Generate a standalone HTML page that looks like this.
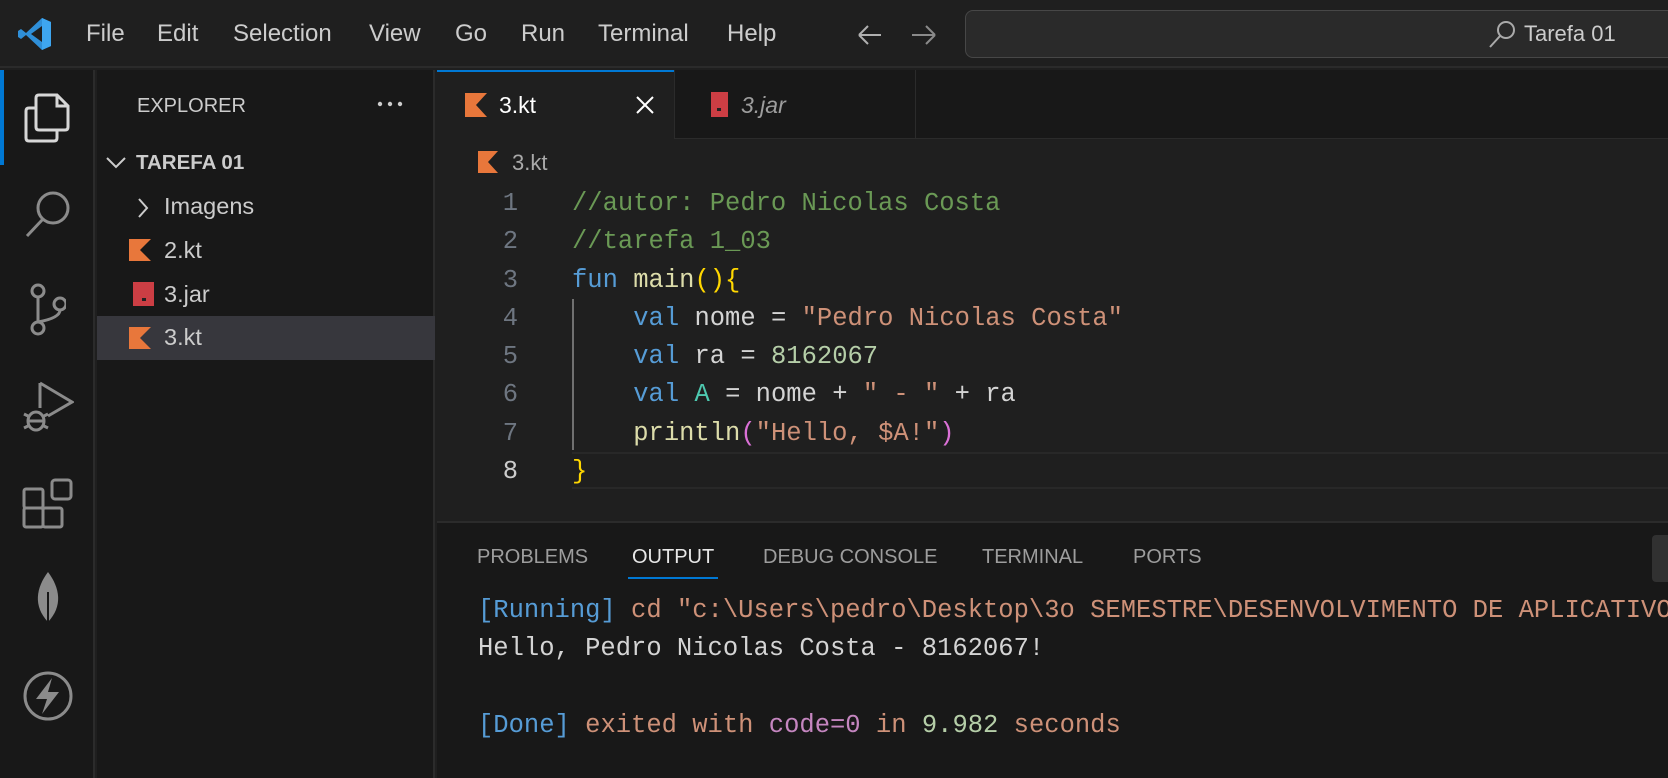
<!DOCTYPE html>
<html><head><meta charset="utf-8"><style>
*{margin:0;padding:0;box-sizing:border-box}
body{width:1668px;height:778px;background:#1f1f1f;overflow:hidden;position:relative;font-family:"Liberation Sans",sans-serif;color:#ccc}
.a{position:absolute}
.menu{top:20px;font-size:24px;color:#cccccc}
.mono{font-family:"Liberation Mono",monospace}
.code{font-size:25.5px;line-height:38.3px;white-space:pre}
.ln{font-size:25.5px;color:#6e7681;width:60px;text-align:right;left:458px}
.ptab{top:546px;font-size:20px;color:#9d9d9d}
.out{font-size:25.5px;white-space:pre;left:478px}
.sb{font-size:23.5px;color:#cccccc}
</style></head><body>
<!-- title bar -->
<div class="a" style="left:0;top:0;width:1668px;height:68px;background:#1f1f1f;border-bottom:2px solid #2b2b2b"></div>
<svg class="a" style="left:18px;top:17px" width="34" height="34" viewBox="0 0 34 34"><path d="M24 1 L33 5 V29 L24 33 L8 18 L3 22 L0 20 V14 L3 12 L8 16 Z M24 9 L13 17 L24 25 Z" fill="#2f8fd8"/><path d="M24 1 L33 5 V29 L24 33 Z" fill="#3ea6f0"/></svg>
<div class="a menu" style="left:86px">File</div>
<div class="a menu" style="left:157px">Edit</div>
<div class="a menu" style="left:233px">Selection</div>
<div class="a menu" style="left:369px">View</div>
<div class="a menu" style="left:455px">Go</div>
<div class="a menu" style="left:521px">Run</div>
<div class="a menu" style="left:598px">Terminal</div>
<div class="a menu" style="left:727px">Help</div>
<svg class="a" style="left:855px;top:22px" width="90" height="26"><path d="M4 13H26M4 13L13 4M4 13L13 22" stroke="#b0b0b0" stroke-width="2" fill="none"/><path d="M57 13H80M80 13L71 4M80 13L71 22" stroke="#8a8a8a" stroke-width="2" fill="none"/></svg>
<div class="a" style="left:965px;top:10px;width:720px;height:48px;border:1.5px solid #474747;border-radius:8px;background:#2a2a2a"></div>
<svg class="a" style="left:1487px;top:20px" width="30" height="30"><circle cx="19" cy="10" r="8" stroke="#aaa" stroke-width="2" fill="none"/><path d="M13 16L3 27" stroke="#aaa" stroke-width="2"/></svg>
<div class="a" style="left:1524px;top:21px;font-size:22px;color:#cccccc">Tarefa 01</div>

<!-- activity bar -->
<div class="a" style="left:0;top:70px;width:95px;height:708px;background:#181818;border-right:2px solid #2b2b2b"></div>
<div class="a" style="left:0;top:70px;width:4px;height:95px;background:#0078d4"></div>
<svg class="a" style="left:22px;top:90px" width="50" height="56" viewBox="0 0 50 56"><path d="M17 5H35L46 16V37Q46 40 43 40H17Q14 40 14 37V8Q14 5 17 5Z M35 5V16H46" stroke="#d7d7d7" stroke-width="3" fill="none"/><path d="M14 18H7Q4 18 4 21V48Q4 51 7 51H32Q35 51 35 48V40" stroke="#d7d7d7" stroke-width="3" fill="none"/></svg>
<svg class="a" style="left:24px;top:188px" width="50" height="50"><circle cx="29" cy="20" r="15" stroke="#8b8b8b" stroke-width="3" fill="none"/><path d="M19 31L3 48" stroke="#8b8b8b" stroke-width="3"/></svg>
<svg class="a" style="left:26px;top:282px" width="40" height="54"><g stroke="#8b8b8b" stroke-width="3" fill="none"><circle cx="12" cy="9" r="6"/><circle cx="12" cy="46" r="6"/><circle cx="34" cy="22" r="6"/><path d="M12 15V40M34 28Q34 36 12 40"/></g></svg>
<svg class="a" style="left:22px;top:380px" width="52" height="52"><g stroke="#8b8b8b" stroke-width="3" fill="none"><path d="M18 3V28M18 3L50 22L26 36"/><ellipse cx="14" cy="41" rx="8" ry="9"/><path d="M2 34L8 37M2 48L8 45M26 34L20 37M26 48L20 45M6 41H22"/></g></svg>
<svg class="a" style="left:22px;top:478px" width="52" height="52"><g stroke="#8b8b8b" stroke-width="3" fill="none"><rect x="2" y="11" width="19" height="19" rx="2"/><rect x="2" y="30" width="19" height="19" rx="2"/><rect x="21" y="30" width="19" height="19" rx="2"/><rect x="30" y="2" width="19" height="19" rx="3"/></g></svg>
<svg class="a" style="left:32px;top:570px" width="32" height="60"><path d="M16 2C4 18 1 36 16 52C31 36 28 18 16 2Z" fill="#8b8b8b"/><path d="M16 22V58" stroke="#181818" stroke-width="2"/></svg>
<svg class="a" style="left:22px;top:670px" width="52" height="52"><circle cx="26" cy="26" r="23" stroke="#8b8b8b" stroke-width="3" fill="none"/><path d="M30 8L14 29H25L20 44L37 22H26Z" fill="#8b8b8b"/></svg>

<!-- sidebar -->
<div class="a" style="left:97px;top:70px;width:338px;height:708px;background:#181818;border-right:2px solid #2b2b2b"></div>
<div class="a" style="left:137px;top:95px;font-size:20px;color:#cccccc">EXPLORER</div>
<svg class="a" style="left:376px;top:100px" width="30" height="8"><circle cx="4" cy="4" r="2.2" fill="#ccc"/><circle cx="14" cy="4" r="2.2" fill="#ccc"/><circle cx="24" cy="4" r="2.2" fill="#ccc"/></svg>
<svg class="a" style="left:104px;top:155px" width="24" height="16"><path d="M3 3L12 12L21 3" stroke="#ccc" stroke-width="2" fill="none"/></svg>
<div class="a" style="left:136px;top:151px;font-size:20.5px;font-weight:bold;color:#cccccc">TAREFA 01</div>
<svg class="a" style="left:136px;top:196px" width="14" height="24"><path d="M3 3L11 12L3 21" stroke="#ccc" stroke-width="2" fill="none"/></svg>
<div class="a sb" style="left:164px;top:193px">Imagens</div>
<svg class="a" style="left:129px;top:239px" width="22" height="22"><path d="M0 0H22L11 11L22 22H0Z" fill="#e8773b"/></svg>
<div class="a sb" style="left:164px;top:237px">2.kt</div>
<svg class="a" style="left:133px;top:282px" width="22" height="24"><rect width="21" height="24" fill="#cc3e44"/><rect x="9" y="16" width="4" height="3" fill="#222"/></svg>
<div class="a sb" style="left:164px;top:281px">3.jar</div>
<div class="a" style="left:97px;top:316px;width:338px;height:44px;background:#37373d"></div>
<svg class="a" style="left:129px;top:327px" width="22" height="22"><path d="M0 0H22L11 11L22 22H0Z" fill="#e8773b"/></svg>
<div class="a sb" style="left:164px;top:324px">3.kt</div>

<!-- tabs -->
<div class="a" style="left:437px;top:70px;width:1231px;height:69px;background:#181818;border-bottom:1px solid #2b2b2b"></div>
<div class="a" style="left:437px;top:70px;width:237px;height:70px;background:#1f1f1f;border-top:2px solid #0078d4"></div>
<div class="a" style="left:674px;top:70px;width:1px;height:69px;background:#2b2b2b"></div>
<div class="a" style="left:915px;top:70px;width:1px;height:69px;background:#2b2b2b"></div>
<svg class="a" style="left:465px;top:93px" width="22" height="24"><path d="M0 0H22L11 12L22 24H0Z" fill="#e8773b"/></svg>
<div class="a" style="left:499px;top:92px;font-size:23px;color:#ffffff">3.kt</div>
<svg class="a" style="left:636px;top:96px" width="18" height="18"><path d="M1 1L17 17M17 1L1 17" stroke="#fff" stroke-width="2"/></svg>
<svg class="a" style="left:711px;top:92px" width="17" height="25"><rect width="17" height="25" fill="#cc3e44"/><rect x="6" y="16" width="4" height="3" fill="#222"/></svg>
<div class="a" style="left:741px;top:92px;font-size:23px;color:#9d9d9d;font-style:italic">3.jar</div>

<!-- breadcrumb -->
<svg class="a" style="left:478px;top:151px" width="20" height="22"><path d="M0 0H20L10 11L20 22H0Z" fill="#e8773b"/></svg>
<div class="a" style="left:512px;top:150px;font-size:22px;color:#a9a9a9">3.kt</div>

<!-- code -->
<div class="a" style="left:572px;top:452px;width:1096px;height:37px;border-top:2px solid #282828;border-bottom:2px solid #282828"></div>
<div class="a" style="left:572px;top:299px;width:2px;height:151px;background:#707070"></div>
<div class="a mono ln" style="top:185px;line-height:38.3px;white-space:pre">1
2
3
4
5
6
7
<span style="color:#ccc">8</span></div>
<div class="a mono code" style="left:572px;top:185px"><span style="color:#6a9955">//autor: Pedro Nicolas Costa</span>
<span style="color:#6a9955">//tarefa 1_03</span>
<span style="color:#569cd6">fun</span> <span style="color:#dcdcaa">main</span><span style="color:#ffd700">(){</span>
    <span style="color:#569cd6">val</span> <span style="color:#d4d4d4">nome</span> <span style="color:#d4d4d4">=</span> <span style="color:#ce9178">"Pedro Nicolas Costa"</span>
    <span style="color:#569cd6">val</span> <span style="color:#d4d4d4">ra =</span> <span style="color:#b5cea8">8162067</span>
    <span style="color:#569cd6">val</span> <span style="color:#4ec9b0">A</span> <span style="color:#d4d4d4">= nome +</span> <span style="color:#ce9178">" - "</span> <span style="color:#d4d4d4">+ ra</span>
    <span style="color:#dcdcaa">println</span><span style="color:#da70d6">(</span><span style="color:#ce9178">"Hello, $A!"</span><span style="color:#da70d6">)</span>
<span style="color:#ffd700">}</span></div>

<!-- panel -->
<div class="a" style="left:437px;top:521px;width:1231px;height:257px;background:#181818;border-top:2px solid #2b2b2b"></div>
<div class="a ptab" style="left:477px">PROBLEMS</div>
<div class="a ptab" style="left:632px;color:#e7e7e7">OUTPUT</div>
<div class="a" style="left:628px;top:577px;width:90px;height:2px;background:#0078d4"></div>
<div class="a ptab" style="left:763px">DEBUG CONSOLE</div>
<div class="a ptab" style="left:982px">TERMINAL</div>
<div class="a ptab" style="left:1133px">PORTS</div>
<div class="a" style="left:1652px;top:535px;width:30px;height:47px;background:#313131;border-radius:4px"></div>
<div class="a mono out" style="top:596px"><span style="color:#569cd6">[Running]</span> <span style="color:#ce9178">cd "c:\Users\pedro\Desktop\3o SEMESTRE\DESENVOLVIMENTO DE APLICATIVOS</span></div>
<div class="a mono out" style="top:634px;color:#d4d4d4">Hello, Pedro Nicolas Costa - 8162067!</div>
<div class="a mono out" style="top:711px"><span style="color:#569cd6">[Done]</span> <span style="color:#ce9178">exited with</span> <span style="color:#c586c0">code=0</span> <span style="color:#ce9178">in</span> <span style="color:#b5cea8">9.982</span> <span style="color:#ce9178">seconds</span></div>
</body></html>
